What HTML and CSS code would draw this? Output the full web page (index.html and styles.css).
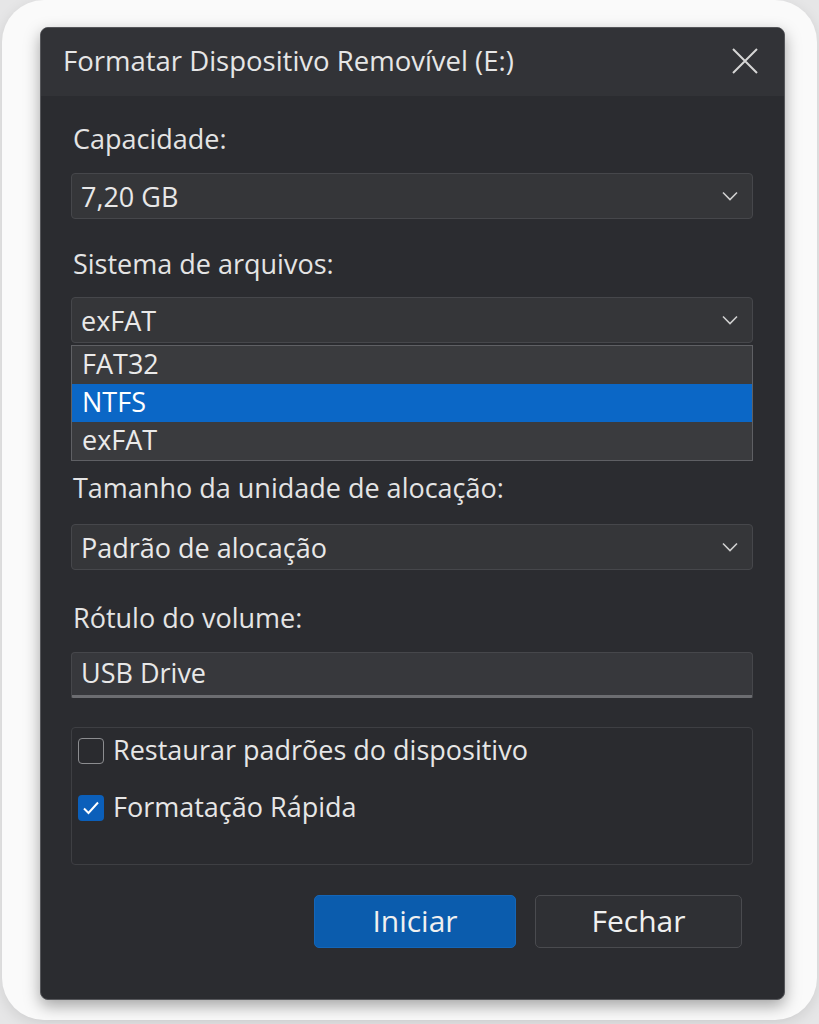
FILE: index.html
```html
<!DOCTYPE html>
<html lang="pt-BR">
<head>
<meta charset="utf-8">
<title>Formatar Dispositivo Removível (E:)</title>
<link rel="stylesheet" href="styles.css">
</head>
<body>
<div class="frame">
  <div class="dialog">
    <div class="titlebar">
      <span class="title">Formatar Dispositivo Removível (E:)</span>
      <svg class="close" viewBox="0 0 28 28" width="28" height="28"><path d="M2 2 L26 26 M26 2 L2 26" stroke="#d6d6d6" stroke-width="2" fill="none"/></svg>
    </div>
    <div class="content">
      <div class="label l1">Capacidade:</div>
      <div class="select s1"><span>7,20 GB</span><svg class="chev" viewBox="0 0 16 10" width="16" height="10"><path d="M1 1.5 L8 8.5 L15 1.5" stroke="#cfcfcf" stroke-width="1.6" fill="none"/></svg></div>

      <div class="label l2">Sistema de arquivos:</div>
      <div class="select s2"><span>exFAT</span><svg class="chev" viewBox="0 0 16 10" width="16" height="10"><path d="M1 1.5 L8 8.5 L15 1.5" stroke="#cfcfcf" stroke-width="1.6" fill="none"/></svg></div>
      <div class="list">
        <div class="item">FAT32</div>
        <div class="item selected">NTFS</div>
        <div class="item">exFAT</div>
      </div>

      <div class="label l3">Tamanho da unidade de alocação:</div>
      <div class="select s3"><span>Padrão de alocação</span><svg class="chev" viewBox="0 0 16 10" width="16" height="10"><path d="M1 1.5 L8 8.5 L15 1.5" stroke="#cfcfcf" stroke-width="1.6" fill="none"/></svg></div>

      <div class="label l4">Rótulo do volume:</div>
      <div class="input">USB Drive</div>

      <div class="group">
        <div class="check">
          <span class="box"></span>
          <span class="ctext">Restaurar padrões do dispositivo</span>
        </div>
        <div class="check c2">
          <span class="box on"><svg viewBox="0 0 26 26" width="26" height="26"><path d="M6 13.5 L10.5 18 L20 7.5" stroke="#ffffff" stroke-width="2" fill="none"/></svg></span>
          <span class="ctext">Formatação Rápida</span>
        </div>
      </div>

      <div class="buttons">
        <div class="btn primary">Iniciar</div>
        <div class="btn secondary">Fechar</div>
      </div>
    </div>
  </div>
</div>
</body>
</html>
```

FILE: styles.css
```css
html, body {
  margin: 0;
  padding: 0;
}
body {
  width: 819px;
  height: 1024px;
  background: #e6e6e7;
  font-family: "Open Sans", "Noto Sans", sans-serif;
  overflow: hidden;
}
.frame {
  width: 815px;
  height: 1020px;
  margin: 0 2px;
  border-radius: 42px;
  background: #fafafa;
  box-shadow: 0 4px 14px rgba(0,0,0,0.10);
  padding: 27px 0 0 38px;
  box-sizing: border-box;
}
.dialog {
  width: 745px;
  height: 973px;
  border-radius: 8px;
  border: 1px solid #55565a;
  box-sizing: border-box;
  background: #2b2c30;
  overflow: hidden;
  box-shadow: 0 6px 16px rgba(0,0,0,0.35);
  display: flex;
  flex-direction: column;
}
.titlebar {
  height: 68px;
  flex: none;
  background: #323337;
  display: flex;
  align-items: center;
  justify-content: space-between;
  padding: 0 25px 0 22px;
  box-sizing: border-box;
}
.title {
  color: #e6e6e6;
  font-size: 27.5px;
  letter-spacing: 0;
  margin-top: -3px;
}
.close {
  display: block;
  margin-top: -3px;
}
.content {
  padding: 0 31px 0 30px;
  display: flex;
  flex-direction: column;
}
.label {
  color: #e4e4e4;
  font-size: 27px;
  line-height: 34px;
  height: 34px;
  padding-left: 2px;
}
.l1 { margin-top: 26px; }
.l2 { margin-top: 28px; }
.l3 { margin-top: 10px; }
.l4 { margin-top: 31px; }
.select {
  height: 46px;
  box-sizing: border-box;
  border: 1px solid #46474b;
  border-radius: 4px;
  background: #353639;
  display: flex;
  align-items: center;
  justify-content: space-between;
  padding: 0 14px 0 9px;
  color: #e8e8e8;
  font-size: 27px;
}
.s1 { margin-top: 17px; }
.s2 { margin-top: 16px; }
.s3 { margin-top: 19px; }
.chev { display: block; }
.list {
  margin-top: 2px;
  border: 1px solid #5f6064;
  background: #3a3b3e;
  box-sizing: border-box;
  width: 682px;
  height: 116px;
  display: flex;
  flex-direction: column;
  padding: 0;
}
.item {
  height: 38px;
  line-height: 36px;
  padding-left: 10px;
  color: #eaeaea;
  font-size: 27px;
}
.item.selected {
  background: #0b67c6;
  color: #ffffff;
}
.input {
  margin-top: 17px;
  height: 46px;
  box-sizing: border-box;
  border: 1px solid #46474b;
  border-bottom: 3px solid #6c6d71;
  border-radius: 4px 4px 2px 2px;
  background: #37383c;
  color: #e8e8e8;
  font-size: 27px;
  line-height: 40px;
  padding-left: 9px;
}
.group {
  margin-top: 29px;
  height: 138px;
  box-sizing: border-box;
  border: 1px solid #3e3f43;
  border-radius: 4px;
  background: #2a2b2f;
  padding: 10px 6px;
  display: flex;
  flex-direction: column;
  gap: 31px;
}
.check {
  display: flex;
  align-items: center;
  height: 26px;
}
.box {
  width: 26px;
  height: 26px;
  box-sizing: border-box;
  border: 1.5px solid #8c8d90;
  border-radius: 4px;
  flex: none;
  display: flex;
  align-items: center;
  justify-content: center;
}
.box.on {
  border: none;
  background: #0b5fba;
}
.box svg { display: block; }
.ctext {
  margin-left: 9px;
  color: #e6e6e6;
  font-size: 27px;
  line-height: 34px;
  margin-top: -2px;
}
.buttons {
  margin-top: 30px;
  display: flex;
  justify-content: flex-end;
  gap: 19px;
  padding-right: 11px;
}
.btn {
  height: 53px;
  box-sizing: border-box;
  border-radius: 5px;
  display: flex;
  align-items: center;
  justify-content: center;
  font-size: 30px;
  color: #f0f0f0;
  padding-bottom: 3px;
}
.primary {
  width: 202px;
  background: #0b5cad;
  border: 1px solid #1466b8;
}
.secondary {
  width: 207px;
  background: #2f3034;
  border: 1px solid #4a4b4f;
}
```
